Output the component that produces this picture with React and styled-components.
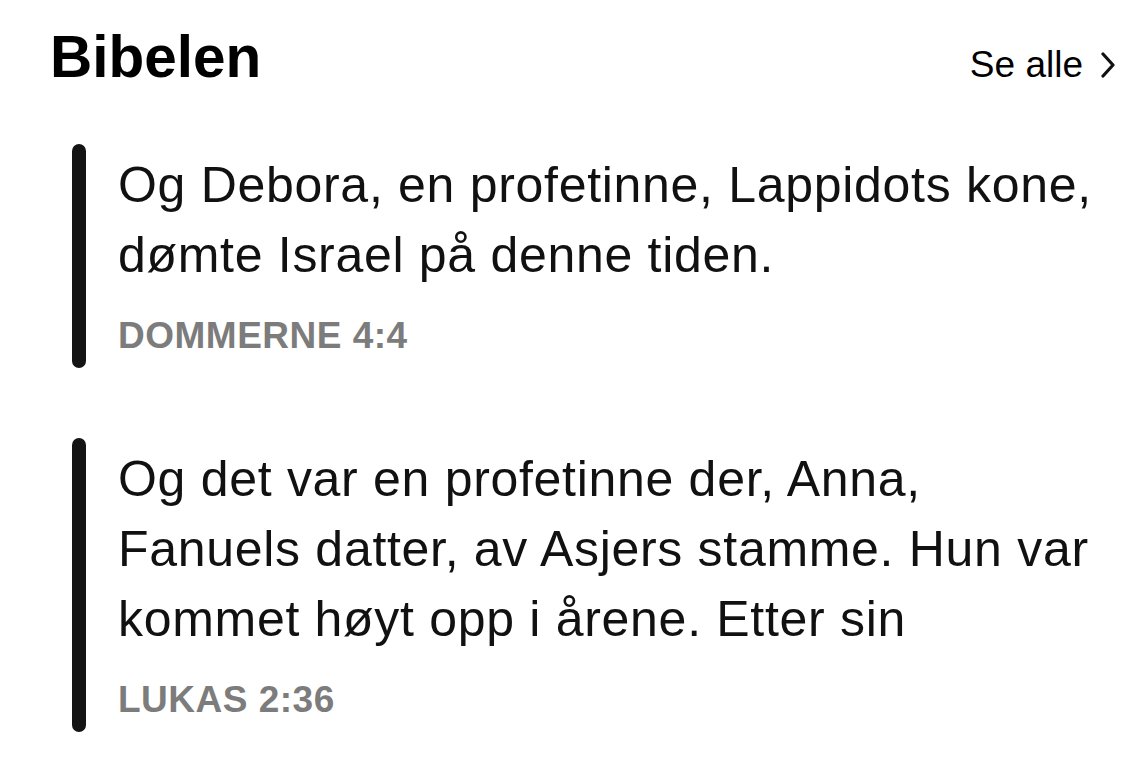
import React from 'react'
import styled, { createGlobalStyle } from 'styled-components'

const verses = [
  {
    ref: 'Dommerne 4:4',
    text: 'Og Debora, en profetinne, Lappidots kone, dømte Israel på denne tiden.',
  },
  {
    ref: 'Lukas 2:36',
    text:
      'Og det var en profetinne der, Anna, Fanuels datter, av Asjers stamme. Hun var kommet høyt opp i årene. Etter sin',
  },
]

export default function App() {
  return (
    <>
      <GlobalStyle />
      <Page>
        <Header>
          <Title>Bibelen</Title>
          <SeeAll href="#">
            Se alle
            <Chevron viewBox="0 0 14 26" aria-hidden="true">
              <polyline points="2,2 12,13 2,24" />
            </Chevron>
          </SeeAll>
        </Header>
        <VerseList>
          {verses.map((verse) => (
            <Verse key={verse.ref}>
              <Bar />
              <VerseBody>
                <VerseText>{verse.text}</VerseText>
                <VerseRef>{verse.ref}</VerseRef>
              </VerseBody>
            </Verse>
          ))}
        </VerseList>
      </Page>
    </>
  )
}

const GlobalStyle = createGlobalStyle`
  body {
    margin: 0;
    background: #fff;
    font-family: "Liberation Sans", Arial, sans-serif;
    color: #000;
  }
`

const Page = styled.div`
  padding: 22px 16px 0 50px;
`

const Header = styled.div`
  display: flex;
  justify-content: space-between;
  align-items: baseline;
`

const Title = styled.h1`
  margin: 0;
  font-size: 58.5px;
  line-height: 1.2;
  font-weight: 700;
`

const SeeAll = styled.a`
  display: flex;
  align-items: center;
  gap: 18px;
  font-size: 37px;
  color: #000;
  text-decoration: none;
`

const Chevron = styled.svg`
  width: 14px;
  height: 26px;
  fill: none;
  stroke: #111;
  stroke-width: 3.2;
  stroke-linecap: round;
  stroke-linejoin: round;
`

const VerseList = styled.div`
  display: flex;
  flex-direction: column;
  gap: 70px;
  margin-top: 52px;
`

const Verse = styled.div`
  display: flex;
  gap: 32px;
  padding-left: 22px;
`

const Bar = styled.div`
  flex: 0 0 14px;
  border-radius: 7px;
  background: #141414;
`

const VerseBody = styled.div`
  flex: 1;
  max-width: 984px;
  padding: 6px 0 10px;
`

const VerseText = styled.p`
  margin: 0;
  font-size: 50px;
  line-height: 70px;
  letter-spacing: 0.7px;
  color: #111;
`

const VerseRef = styled.div`
  margin-top: 24px;
  font-size: 37px;
  line-height: 44px;
  font-weight: 700;
  letter-spacing: 0.5px;
  text-transform: uppercase;
  color: #7c7c7c;
`
